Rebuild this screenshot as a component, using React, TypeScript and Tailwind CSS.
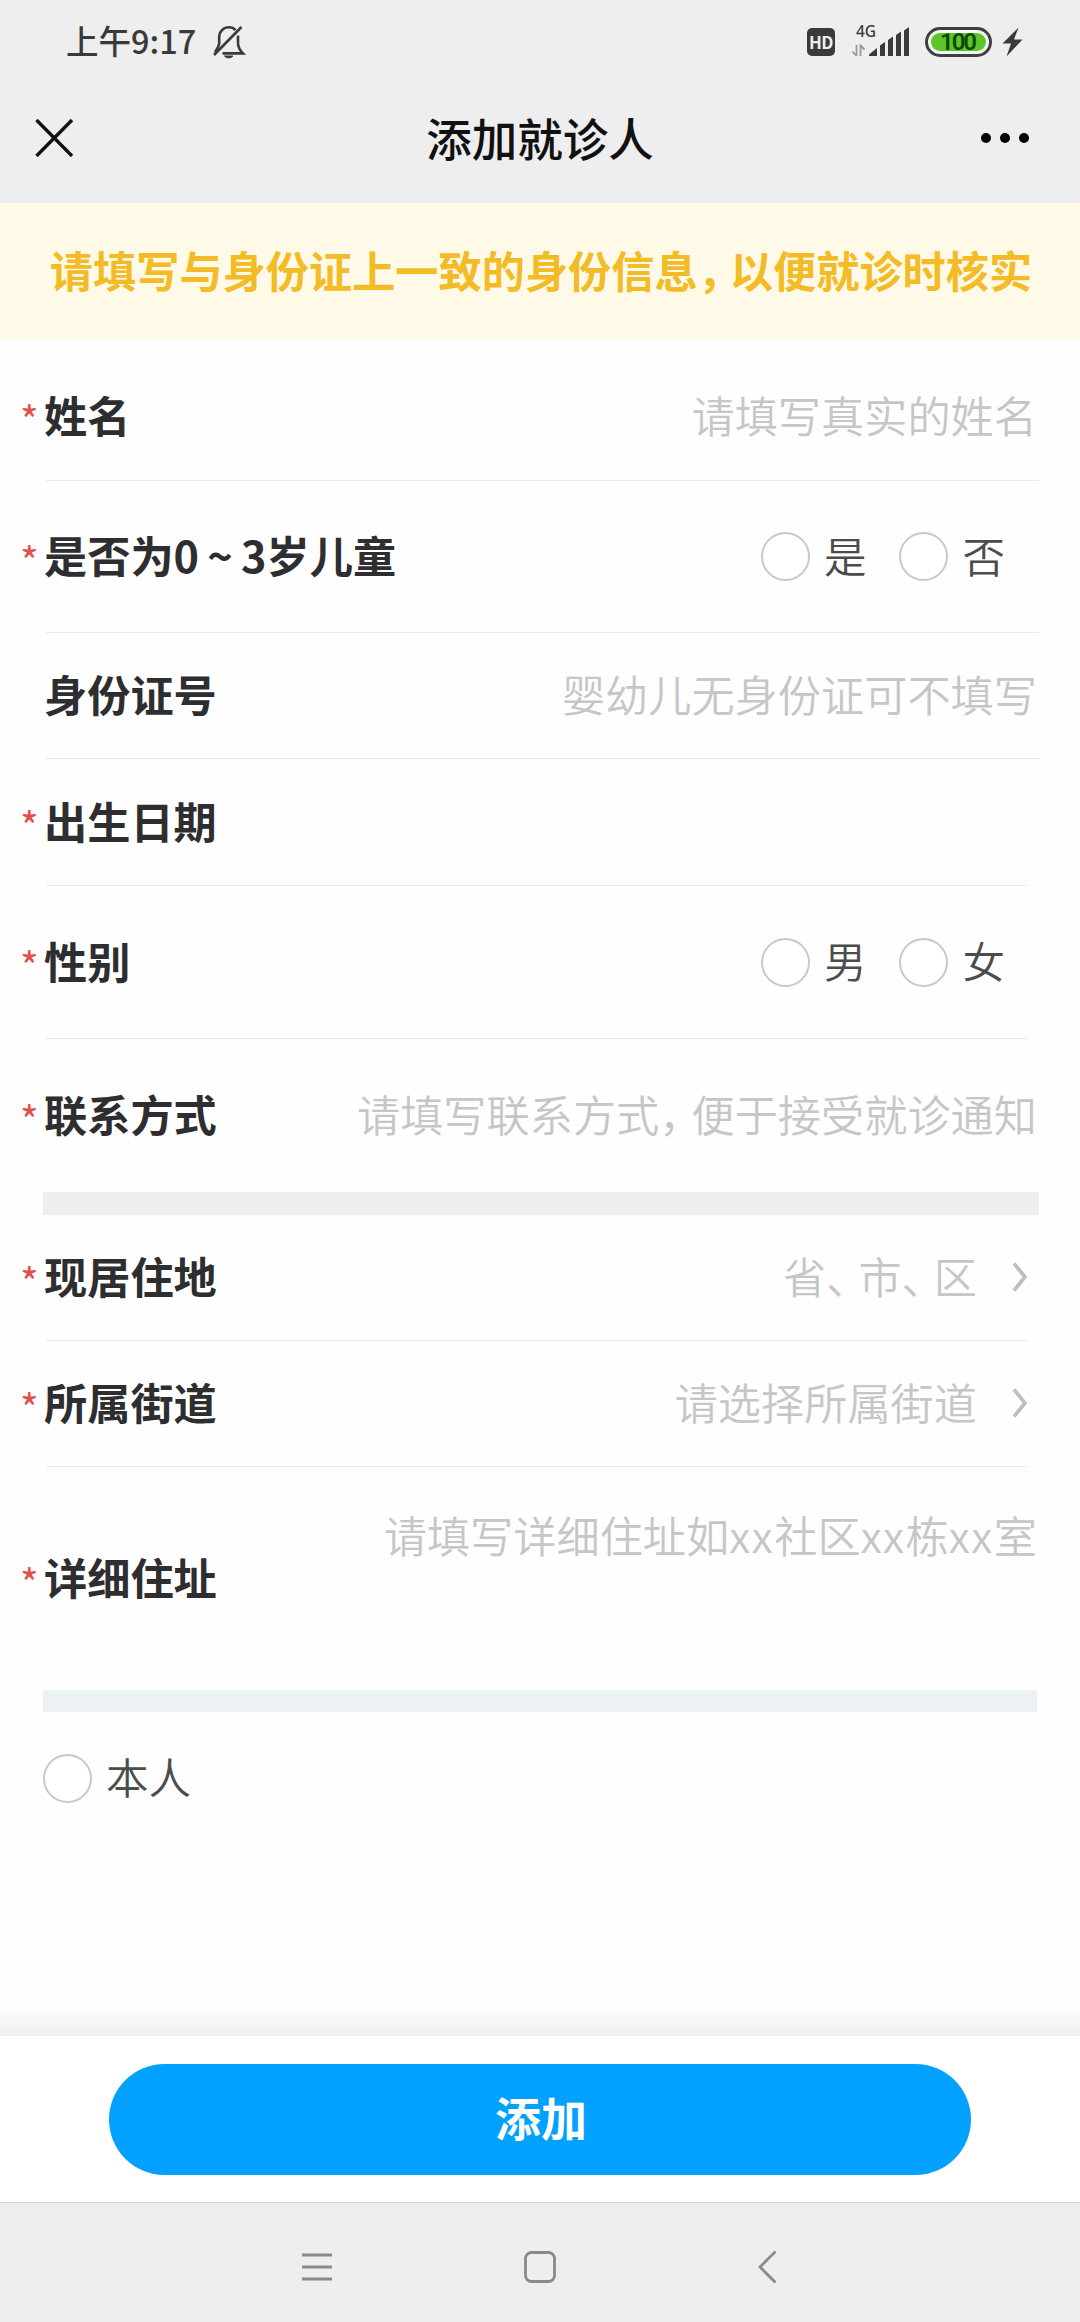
import type { ReactNode } from 'react';
import clsx from 'clsx';

/* Full-width punctuation with the tighter advance used by the system font */
function Narrow({ children }: { children: ReactNode }) {
  return <span className="tracking-[-11px]">{children}</span>;
}

function StatusBar() {
  return (
    <div className="flex h-[84px] items-center pl-[66px] pr-[57px] text-[#3a3a3a]">
      <span className="pb-[3px] text-[32.500px] leading-none font-medium whitespace-nowrap">上午9:17</span>
      <svg className="ml-[16px] h-[34px] w-[34px]" viewBox="0 0 34 34" fill="none" stroke="currentColor" strokeWidth="2.6">
        <path d="M23.500 5.200C21.500 3 19 2.300 17 2.300C11.500 2.300 7.200 6.500 7.200 12V18C7.200 20.500 5.500 23.500 3 27" />
        <path d="M26 10.500V18C26 21.500 28 25.500 31 28.400H10.500" />
        <path d="M2 30L29.500 2" />
        <path d="M12.500 31C14.500 33.500 19 33.500 21 31Z" fill="currentColor" strokeWidth="1" />
      </svg>

      <div className="ml-auto flex items-center">
        <div className="flex h-7 w-7 items-center justify-center rounded-[5px] bg-[#3a3a3a] text-[17px] leading-none font-bold tracking-[-0.5px] text-[#eee]">
          <span className="pb-px">HD</span>
        </div>
        <svg className="ml-[17px] h-[48px] w-[57px]" viewBox="0 -9 57 48" fill="currentColor">
          <text x="4" y="10" fontSize="15.500" fontWeight="500" fontFamily="Noto Sans">4G</text>
          <path d="M4.500 18V29M4.500 29L0.500 24.500M8.500 29V18.500L12.500 22.500" fill="none" stroke="#999" strokeWidth="1.800" />
          <path d="M17 29V27.500L25 21V29Z" />
          <path d="M28 29V18.500L33 15V29Z" />
          <path d="M36 29V13L41 9.500V29Z" />
          <path d="M44 29V8L49 4.500V29Z" />
          <path d="M52 29V3.500L57 0V29Z" />
        </svg>
        <div className="ml-4 flex h-[30px] w-[67px] rounded-full border-[3px] border-[#403c4c] bg-[#effce6] p-[3px]">
          <div className="flex flex-1 items-center justify-center rounded-full bg-[#5dc42c] font-[Roboto] text-[24px] leading-[18px] font-semibold tracking-[-2px] text-[#0c4a08]">
            <span className="pr-[2px]">100</span>
          </div>
        </div>
        <svg className="ml-[10px] h-[30px] w-[21px]" viewBox="0 0 21 30" fill="currentColor">
          <path d="M16.500 0.500L0.500 16.500H9L4.500 29.500L20.500 12.500H12Z" />
        </svg>
      </div>
    </div>
  );
}

function TitleBar() {
  return (
    <header className="grid h-[119px] grid-cols-3 items-center px-[35px] pb-[11px]">
      <svg className="h-[38px] w-[38px]" viewBox="0 0 38 38" stroke="#111" strokeWidth="3.400">
        <path d="M1.500 1L37 37M37 1L1.500 37" />
      </svg>
      <h1 className="text-center text-[45.500px] leading-none font-medium text-[#111]">添加就诊人</h1>
      <div className="flex justify-end gap-[9px] pr-[16px]">
        <i className="h-[10px] w-[10px] rounded-full bg-black" />
        <i className="h-[10px] w-[10px] rounded-full bg-black" />
        <i className="h-[10px] w-[10px] rounded-full bg-black" />
      </div>
    </header>
  );
}

type FieldProps = {
  label: ReactNode;
  required?: boolean;
  className: string;
  children?: ReactNode;
};

function Field({ label, required = true, className, children }: FieldProps) {
  return (
    <div className={clsx('flex items-center pr-[43px]', className)}>
      <span className="w-[44px] pt-[6px] pl-[20px] text-[40px] leading-none text-[#e0504f]">{required && '*'}</span>
      <label className="pb-[3px] text-[43.200px] leading-none font-bold whitespace-nowrap text-[#2e2e30]">{label}</label>
      <div className="ml-auto flex items-center">{children}</div>
    </div>
  );
}

function Placeholder({ children }: { children: ReactNode }) {
  return (
    <span className="pb-[3px] text-[43.200px] leading-none font-[350] whitespace-nowrap text-[#c6c6c6]">{children}</span>
  );
}

function Radio({ label }: { label: string }) {
  return (
    <span className="flex items-center gap-[14px]">
      <i className="h-[49px] w-[49px] rounded-full border-2 border-[#c8c8c8] bg-white" />
      <span className="pb-[3px] text-[42.500px] leading-none font-[350] text-[#4c4c4c]">{label}</span>
    </span>
  );
}

function Arrow() {
  return (
    <svg className="mr-[9px] ml-[35px] h-[30px] w-[16px]" viewBox="0 0 16 30" fill="none" stroke="#bdbdbd" strokeWidth="3.600">
      <path d="M2 1.500L13 15L2 28.500" />
    </svg>
  );
}

function Divider({ short }: { short?: boolean }) {
  return <div className={clsx('ml-[46px] h-px bg-[#e9e9ea]', short ? 'mr-[53px]' : 'mr-[41px]')} />;
}

export default function App() {
  return (
    <div className="flex h-[2322px] w-[1080px] flex-col overflow-hidden bg-[#fefefe] font-['Noto_Sans_CJK_SC',sans-serif]">
      <div className="bg-[#eeeeee]">
        <StatusBar />
        <TitleBar />
      </div>

      {/* Notice */}
      <div className="flex h-[137px] items-center justify-center bg-[#fffae7] pb-[4px] pl-[2px] text-[43.200px] leading-none font-bold whitespace-nowrap text-[#f3bb26]">
        <span>
          请填写与身份证上一致的身份信息<Narrow>，</Narrow>以便就诊时核实
        </span>
      </div>

      {/* Patient info */}
      <Field label="姓名" className="mt-[12px] h-[128px]">
        <Placeholder>请填写真实的姓名</Placeholder>
      </Field>
      <Divider />
      <Field
        label={
          <>
            是否为0<span className="inline-block w-[42px] text-center">~</span>3岁儿童
          </>
        }
        className="h-[151px]"
      >
        <div className="flex gap-[33px] pr-[32px]">
          <Radio label="是" />
          <Radio label="否" />
        </div>
      </Field>
      <Divider />
      <Field label="身份证号" required={false} className="h-[125px]">
        <Placeholder>婴幼儿无身份证可不填写</Placeholder>
      </Field>
      <Divider />
      <Field label="出生日期" className="h-[126px]" />
      <Divider short />
      <Field label="性别" className="h-[152px]">
        <div className="flex gap-[33px] pr-[32px]">
          <Radio label="男" />
          <Radio label="女" />
        </div>
      </Field>
      <Divider short />
      <Field label="联系方式" className="h-[153px]">
        <Placeholder>
          请填写联系方式<Narrow>，</Narrow>便于接受就诊通知
        </Placeholder>
      </Field>
      <div className="mr-[41px] ml-[43px] h-[23px] bg-[#efeff0]" />

      {/* Address */}
      <Field label="现居住地" className="h-[125px]">
        <Placeholder>
          省<Narrow>、</Narrow>市<Narrow>、</Narrow>区
        </Placeholder>
        <Arrow />
      </Field>
      <Divider short />
      <Field label="所属街道" className="h-[125px]">
        <Placeholder>请选择所属街道</Placeholder>
        <Arrow />
      </Field>
      <Divider short />
      <Field label="详细住址" className="h-[223px]">
        <div className="pb-[87px]">
          <Placeholder>
            请填写详细住址如<span className="tracking-[1.5px]">xx</span>社区<span className="tracking-[1.5px]">xx</span>栋
            <span className="tracking-[1.5px]">xx</span>室
          </Placeholder>
        </div>
      </Field>
      <div className="mr-[43px] ml-[43px] h-[22px] bg-[#ecf1f3]" />

      <div className="flex h-[132px] items-center pl-[43px]">
        <Radio label="本人" />
      </div>

      {/* Submit */}
      <div className="mt-auto h-[26px] bg-linear-to-b from-[#fdfdfd] to-[#f0f0f1]" />
      <div className="flex h-[166px] justify-center bg-white pt-[28px]">
        <button className="h-[111px] w-[862px] rounded-full bg-[#02a1ff] pb-[8px] pl-[2px] text-[46px] leading-none font-bold text-white">
          添加
        </button>
      </div>

      {/* System navigation */}
      <nav className="flex h-[120px] items-center border-t border-[#d6d6d6] bg-[#eeeeee] pl-[302px] pb-[7px] pt-[16px] text-[#8a8a8a]">
        <svg className="h-[34px] w-[30px]" viewBox="0 0 30 34" stroke="currentColor" strokeWidth="2.800">
          <path d="M0 5H30M0 17H30M0 29H30" />
        </svg>
        <svg className="ml-[192px] h-[34px] w-[32px]" viewBox="0 0 32 34" fill="none" stroke="currentColor" strokeWidth="2.800">
          <rect x="1.500" y="2.500" width="29" height="29" rx="6" />
        </svg>
        <svg className="ml-[202px] h-[34px] w-[19px]" viewBox="0 0 19 34" fill="none" stroke="currentColor" strokeWidth="2.800">
          <path d="M17.500 1.500L2 17L17.500 32.500" />
        </svg>
      </nav>
    </div>
  );
}
